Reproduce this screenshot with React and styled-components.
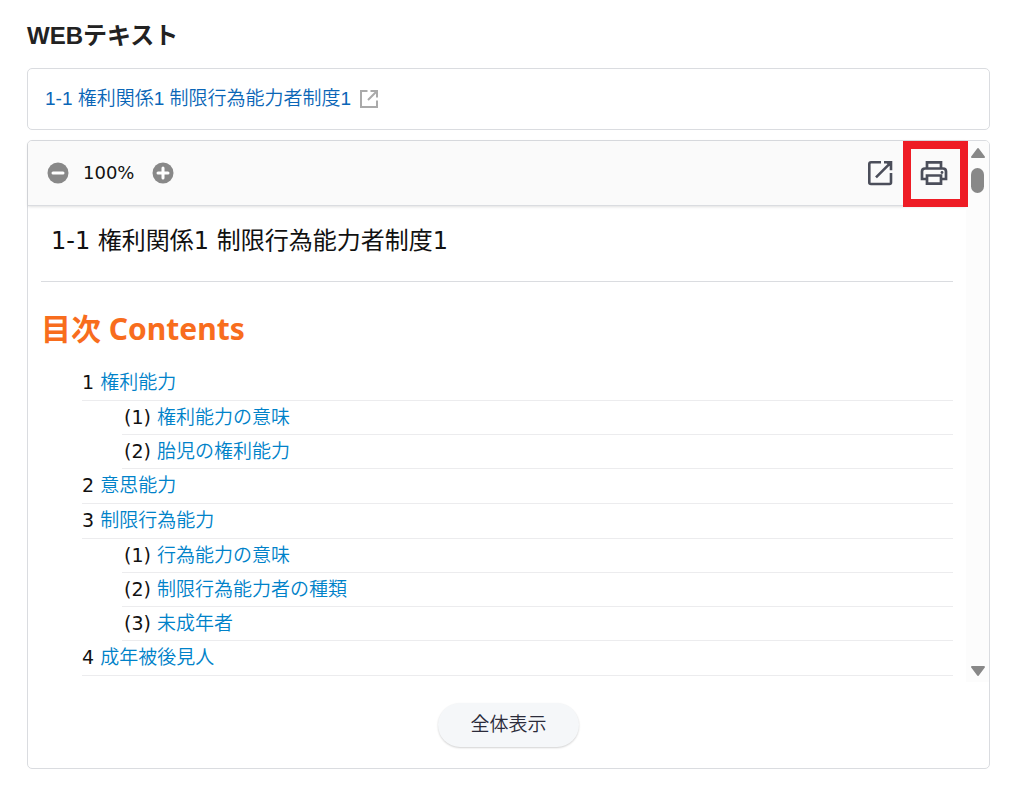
import styled, { createGlobalStyle } from "styled-components";

const colors = {
  line: "#dadce0",
  paleLine: "#ececee",
  gray: "#888888",
  icon: "#4b4e5a",
  link: "#0a66b7",
  tocLink: "#0082c9",
  orange: "#f86d1d",
  red: "#ee1c25",
};

const lesson = "1-1 権利関係1 制限行為能力者制度1";

const contents = [
  {
    label: "1",
    title: "権利能力",
    children: [
      { label: "(1)", title: "権利能力の意味" },
      { label: "(2)", title: "胎児の権利能力" },
    ],
  },
  { label: "2", title: "意思能力" },
  {
    label: "3",
    title: "制限行為能力",
    children: [
      { label: "(1)", title: "行為能力の意味" },
      { label: "(2)", title: "制限行為能力者の種類" },
      { label: "(3)", title: "未成年者" },
    ],
  },
  { label: "4", title: "成年被後見人" },
];

function OpenSmallIcon() {
  return (
    <svg width="20" height="20" viewBox="0 0 20 20" fill="none" stroke="#aaaaaa" strokeWidth="2" aria-hidden="true">
      <path d="M8.500 2H2v16h16v-6.500" />
      <path d="M11.500 2H18v6.500M17.500 2.500L9 11" />
    </svg>
  );
}

function OpenIcon() {
  return (
    <svg width="26" height="26" viewBox="0 0 26 26" fill="none" stroke={colors.icon} strokeWidth="2.600" aria-hidden="true">
      <path d="M14 2.300H4Q2.300 2.300 2.300 4v18.500Q2.300 24 4 24h18.500q1.500 0 1.500-1.500V13" />
      <path d="M17 2.300h7v8M23.500 2.800L9 17.300" />
      <path d="M18.500 2h5.800v5.800z" fill={colors.icon} stroke="none" />
    </svg>
  );
}

function PrintIcon() {
  return (
    <svg width="28" height="26" viewBox="0 0 28 26" fill="none" stroke={colors.icon} strokeWidth="2.700" aria-hidden="true">
      <path d="M7 8.500V2.300h14v6.200" />
      <path d="M7 19H2v-7.500q0-3 3-3h18q3 0 3 3V19h-5" />
      <path d="M7 15.500h14v8.200H7z" />
      <circle cx="22" cy="12.500" r="1.400" fill={colors.icon} stroke="none" />
    </svg>
  );
}

function ZoomIcon({ plus }) {
  return (
    <svg width="22" height="22" viewBox="0 0 22 22" aria-hidden="true">
      <circle cx="11" cy="11" r="10.500" fill={colors.gray} />
      <path
        d={plus ? "M6 11h10M11 6v10" : "M6 11h10"}
        stroke="#fff"
        strokeWidth="3"
        strokeLinecap="round"
      />
    </svg>
  );
}

function Contents({ items, nested }) {
  return (
    <List $nested={nested}>
      {items.map(({ label, title, children }) => (
        <li key={label}>
          <Entry $nested={nested}>
            {label} <a href="#text">{title}</a>
          </Entry>
          {children && <Contents items={children} nested />}
        </li>
      ))}
    </List>
  );
}

export default function App() {
  return (
    <Page>
      <GlobalStyle />
      <PageTitle>WEBテキスト</PageTitle>
      <LinkCard>
        <a href="#text">{lesson}</a>
        <OpenSmallIcon />
      </LinkCard>
      <Panel>
        <Viewer>
          <Document>
            <Toolbar>
              <IconButton type="button" aria-label="縮小">
                <ZoomIcon />
              </IconButton>
              <Zoom>100%</Zoom>
              <IconButton type="button" aria-label="拡大">
                <ZoomIcon plus />
              </IconButton>
              <Tools>
                <IconButton type="button" aria-label="別ウィンドウで開く">
                  <OpenIcon />
                </IconButton>
                <PrintButton type="button" aria-label="印刷">
                  <PrintIcon />
                </PrintButton>
              </Tools>
            </Toolbar>
            <Body id="text">
              <LessonTitle>{lesson}</LessonTitle>
              <ContentsTitle>目次 Contents</ContentsTitle>
              <Contents items={contents} />
            </Body>
          </Document>
          <Scrollbar aria-hidden="true">
            <svg width="16" height="12" viewBox="0 0 16 12">
              <path d="M8 2L14 10H2z" fill={colors.gray} stroke={colors.gray} strokeWidth="2" strokeLinejoin="round" />
            </svg>
            <Thumb />
            <svg width="16" height="12" viewBox="0 0 16 12">
              <path d="M8 10L14 2H2z" fill={colors.gray} stroke={colors.gray} strokeWidth="2" strokeLinejoin="round" />
            </svg>
          </Scrollbar>
        </Viewer>
        <Footer>
          <ShowAll type="button">全体表示</ShowAll>
        </Footer>
      </Panel>
    </Page>
  );
}

const GlobalStyle = createGlobalStyle`
  * {
    box-sizing: border-box;
  }
  body {
    margin: 0;
    background-color: #fff;
    font-family: "Liberation Sans", "Noto Sans CJK JP", sans-serif;
  }
  a {
    text-decoration: none;
  }
  svg {
    display: block;
    flex-shrink: 0;
  }
`;

const Page = styled.main`
  padding: 20px 34px 23px 27px;
`;

const PageTitle = styled.h1`
  margin: 0 0 16px;
  font-size: 24px;
  line-height: 32px;
  font-weight: 700;
  color: #222;
`;

const LinkCard = styled.div`
  display: flex;
  align-items: center;
  gap: 8px;
  height: 62px;
  margin-bottom: 10px;
  padding: 0 17px;
  border: 1px solid ${colors.line};
  border-radius: 5px;
  font-size: 19px;
  font-weight: 350;
  > a {
    padding-bottom: 5px;
    color: ${colors.link};
  }
`;

const Panel = styled.section`
  border: 1px solid ${colors.line};
  border-radius: 5px;
`;

const Viewer = styled.div`
  display: flex;
`;

const Document = styled.div`
  flex: 1;
  min-width: 0;
  font-family: "DejaVu Sans", "Noto Sans CJK JP", sans-serif;
  color: #111;
`;

const Toolbar = styled.div`
  display: flex;
  align-items: center;
  height: 65px;
  padding-left: 19px;
  border-bottom: 1px solid ${colors.line};
  border-top-left-radius: 4px;
  background-color: #fafafa;
  box-shadow: 0 1px 3px rgba(0, 0, 0, 0.12);
`;

const IconButton = styled.button`
  display: flex;
  align-items: center;
  justify-content: center;
  padding: 0;
  border: none;
  background: none;
  cursor: pointer;
`;

const Zoom = styled.span`
  width: 83px;
  padding: 0 0 2px 14px;
  font-size: 18px;
`;

const Tools = styled.div`
  display: flex;
  align-items: center;
  gap: 9px;
  margin-left: auto;
`;

const PrintButton = styled(IconButton)`
  position: relative;
  width: 64px;
  height: 64px;
  &::after {
    content: "";
    position: absolute;
    inset: 0 -2px -2px 1px;
    border: 8px solid ${colors.red};
  }
`;

const Body = styled.div`
  padding: 0 13px 6px;
`;

const LessonTitle = styled.h2`
  margin: 0;
  padding: 17px 10px 21px;
  border-bottom: 1px solid ${colors.line};
  font-size: 24px;
  line-height: 37px;
  font-weight: 400;
`;

const ContentsTitle = styled.h3`
  margin: 0;
  padding: 24px 0 14px;
  font-family: "Noto Sans", "Noto Sans CJK JP", sans-serif;
  font-size: 30px;
  line-height: 46px;
  font-weight: 700;
  color: ${colors.orange};
`;

const List = styled.ol`
  margin: 0;
  padding: 0 0 0 ${(p) => (p.$nested ? "40px" : "41px")};
  list-style: none;
`;

const Entry = styled.div`
  height: ${(p) => (p.$nested ? "34px" : "35px")};
  padding-left: ${(p) => (p.$nested ? "2px" : "0")};
  border-bottom: 1px solid ${colors.paleLine};
  font-size: 19px;
  line-height: 33px;
  > a {
    font-weight: 350;
    color: ${colors.tocLink};
  }
`;

const Scrollbar = styled.div`
  display: flex;
  flex-direction: column;
  align-items: center;
  width: 23px;
  padding: 6px 0 5px;
  border-top-right-radius: 4px;
  background-color: #fcfcfc;
  > svg:last-child {
    margin-top: auto;
  }
`;

const Thumb = styled.span`
  width: 13px;
  height: 25px;
  margin-top: 9px;
  border-radius: 7px;
  background-color: ${colors.gray};
`;

const Footer = styled.div`
  display: flex;
  justify-content: center;
  padding: 21px 0;
`;

const ShowAll = styled.button`
  width: 141px;
  height: 44px;
  padding: 0 0 5px;
  border: none;
  border-radius: 22px;
  background-color: #f5f7f9;
  box-shadow: 0 1px 2px rgba(0, 0, 0, 0.18);
  font-family: inherit;
  font-size: 19px;
  font-weight: 350;
  color: #2b2b3a;
  cursor: pointer;
`;
